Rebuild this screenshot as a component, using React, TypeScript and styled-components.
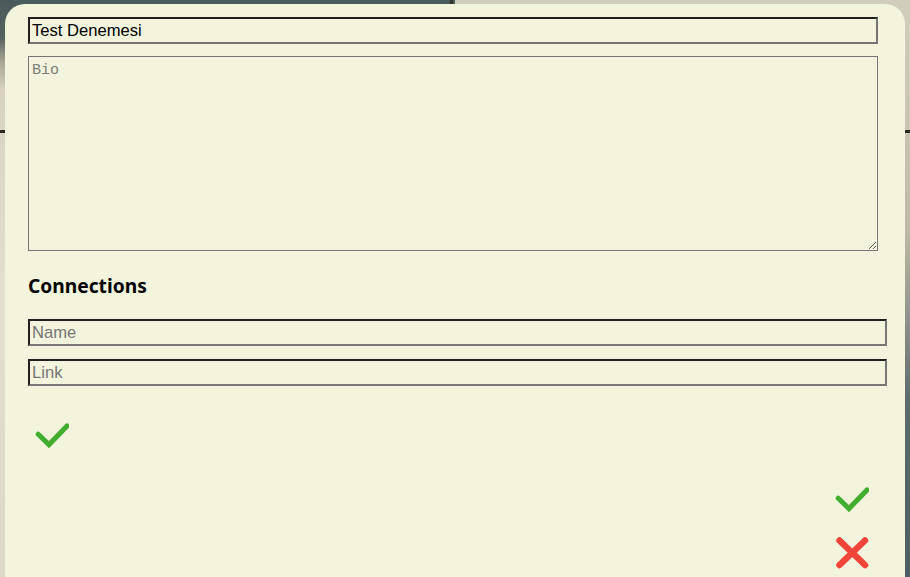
import React from "react";
import styled, { createGlobalStyle } from "styled-components";

const GlobalStyle = createGlobalStyle`
  html, body {
    margin: 0;
    padding: 0;
    height: 100%;
    overflow: hidden;
  }
  body {
    font-family: "Liberation Sans", Arial, sans-serif;
  }
`;

const Backdrop = styled.div`
  width: 910px;
  height: 577px;
  box-sizing: border-box;
  padding: 4px 5px 0 5px;
  overflow: hidden;
  background:
    linear-gradient(to right, transparent 450px, #34342a 450px, #34342a 453px, transparent 453px) 0 0 / 910px 6px no-repeat,
    linear-gradient(to bottom, transparent 130px, #26261a 130px, #26261a 133px, transparent 133px) 0 0 / 910px 577px no-repeat,
    linear-gradient(to bottom, #4a5b5c 0, #56635f 38px, #a9a692 62px, #d8d2bf 90px, #e4dfce 300px, #ddd7c5 577px) 0 0 / 455px 577px no-repeat,
    linear-gradient(to bottom, #d2cebc 0, #c9c5b2 120px, #bdb9a6 230px, #8f918a 320px, #5d6b6d 400px, #4d5d61 577px) 455px 0 / 455px 577px no-repeat;
`;

const Modal = styled.div`
  height: 573px;
  box-sizing: border-box;
  background: #f2f5dc;
  border-radius: 20px 20px 0 0;
  padding: 13px 18px 0 23px;
  display: flex;
  flex-direction: column;
`;

const TextInput = styled.input<{ $w: number }>`
  box-sizing: border-box;
  width: ${(p) => p.$w}px;
  height: 27px;
  margin: 0;
  padding: 1px 2px;
  background: transparent;
  border-style: solid;
  border-width: 2px;
  border-color: #1f1f1f #767676 #767676 #1f1f1f;
  font-family: "Liberation Sans", Arial, sans-serif;
  font-size: 16.6px;
  color: #000;
  outline: none;
  &::placeholder {
    color: #767676;
  }
`;

const BioArea = styled.textarea`
  box-sizing: border-box;
  width: 850px;
  height: 195px;
  margin: 12px 0 0 0;
  padding: 5px 3px 3px 3px;
  background: transparent;
  border: 1px solid #767676;
  font-family: "Liberation Mono", "DejaVu Sans Mono", monospace;
  font-size: 15px;
  line-height: 18px;
  color: #000;
  outline: none;
  &::placeholder {
    color: #7d7d76;
  }
`;

const SectionTitle = styled.h3`
  margin: 24px 0 0 0;
  font-family: "Noto Sans", "Open Sans", sans-serif;
  font-weight: 700;
  font-size: 19.2px;
  line-height: 22px;
  color: #000;
`;

const FieldStack = styled.div`
  display: flex;
  flex-direction: column;
  gap: 13px;
  margin-top: 22px;
`;

const IconButton = styled.button<{ $mt: number; $ml?: number }>`
  display: block;
  margin: ${(p) => p.$mt}px 0 0 ${(p) => p.$ml ?? 0}px;
  padding: 0;
  border: 0;
  background: transparent;
  cursor: pointer;
  line-height: 0;
  align-self: ${(p) => (p.$ml !== undefined ? "flex-start" : "auto")};
`;

const Actions = styled.div`
  display: flex;
  flex-direction: column;
  align-items: flex-end;
  padding-right: 18px;
`;

const CheckIcon = () => (
  <svg width="34" height="28" viewBox="0 0 34 28">
    <path
      d="M3.2 12.2 L14 22.6 L32 4"
      fill="none"
      stroke="#41ae2c"
      strokeWidth="5"
      strokeLinecap="round"
      strokeLinejoin="miter"
    />
  </svg>
);

const CrossIcon = () => (
  <svg width="36" height="36" viewBox="0 0 36 36">
    <path
      d="M6.5 6.5 L32 31 M32 6.5 L6.5 31"
      fill="none"
      stroke="#f2453a"
      strokeWidth="6.5"
      strokeLinecap="round"
    />
  </svg>
);

export default function App() {
  return (
    <>
      <GlobalStyle />
      <Backdrop>
        <Modal>
          <TextInput $w={850} defaultValue="Test Denemesi" />
          <BioArea placeholder="Bio" />
          <SectionTitle>Connections</SectionTitle>
          <FieldStack>
            <TextInput $w={859} placeholder="Name" />
            <TextInput $w={859} placeholder="Link" />
          </FieldStack>
          <IconButton $mt={36} $ml={7} aria-label="Add connection">
            <CheckIcon />
          </IconButton>
          <Actions>
            <IconButton $mt={36} aria-label="Save">
              <CheckIcon />
            </IconButton>
            <IconButton $mt={20} aria-label="Cancel">
              <CrossIcon />
            </IconButton>
          </Actions>
        </Modal>
      </Backdrop>
    </>
  );
}
